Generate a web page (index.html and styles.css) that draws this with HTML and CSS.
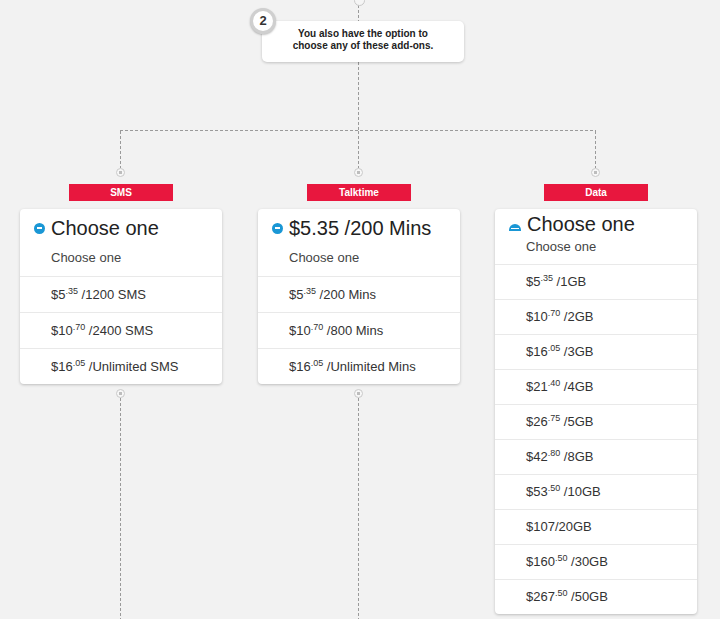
FILE: index.html
```html
<!DOCTYPE html>
<html lang="en">
<head>
<meta charset="utf-8">
<title>Add-ons</title>
<link rel="stylesheet" href="styles.css">
</head>
<body>
<div class="page">
  <div class="stem stem--top"></div>
  <div class="step">
    <span class="step-badge">2</span>
    <p class="step-text">You also have the option to<br>choose any of these add-ons.</p>
  </div>
  <div class="stem stem--mid"></div>
  <div class="hline"></div>

  <div class="columns">
    <div class="col">
      <div class="drop"></div>
      <div class="node"></div>
      <div class="label">SMS</div>
      <div class="card">
        <div class="card-head">
          <div class="card-title"><span class="icon"></span>Choose one</div>
          <div class="card-sub">Choose one</div>
        </div>
        <div class="row">$5<sup>.35</sup> /1200 SMS</div>
        <div class="row">$10<sup>.70</sup> /2400 SMS</div>
        <div class="row">$16<sup>.05</sup> /Unlimited SMS</div>
      </div>
      <div class="node node--below"></div>
      <div class="tail"></div>
    </div>

    <div class="col">
      <div class="drop"></div>
      <div class="node"></div>
      <div class="label">Talktime</div>
      <div class="card">
        <div class="card-head">
          <div class="card-title"><span class="icon"></span>$5.35 /200 Mins</div>
          <div class="card-sub">Choose one</div>
        </div>
        <div class="row">$5<sup>.35</sup> /200 Mins</div>
        <div class="row">$10<sup>.70</sup> /800 Mins</div>
        <div class="row">$16<sup>.05</sup> /Unlimited Mins</div>
      </div>
      <div class="node node--below"></div>
      <div class="tail"></div>
    </div>

    <div class="col col--data">
      <div class="drop"></div>
      <div class="node"></div>
      <div class="label">Data</div>
      <div class="card card--data">
        <div class="card-head">
          <div class="card-title"><span class="icon icon--clipped"><span class="icon-dot"></span></span>Choose one</div>
          <div class="card-sub">Choose one</div>
        </div>
        <div class="row">$5<sup>.35</sup> /1GB</div>
        <div class="row">$10<sup>.70</sup> /2GB</div>
        <div class="row">$16<sup>.05</sup> /3GB</div>
        <div class="row">$21<sup>.40</sup> /4GB</div>
        <div class="row">$26<sup>.75</sup> /5GB</div>
        <div class="row">$42<sup>.80</sup> /8GB</div>
        <div class="row">$53<sup>.50</sup> /10GB</div>
        <div class="row">$107/20GB</div>
        <div class="row">$160<sup>.50</sup> /30GB</div>
        <div class="row">$267<sup>.50</sup> /50GB</div>
      </div>
    </div>
  </div>
</div>
</body>
</html>
```

FILE: styles.css
```css
* { box-sizing: border-box; }

html, body {
  margin: 0;
  padding: 0;
  height: 619px;
  overflow: hidden;
  background: #f2f2f2;
  font-family: "Liberation Sans", Arial, Helvetica, sans-serif;
  color: #333;
}

.page {
  width: 720px;
}

/* dashed connectors */
.stem {
  width: 1px;
  margin-left: 358px;
  background: repeating-linear-gradient(to bottom, #9a9a9a 0 3px, transparent 3px 5px);
}
.stem--top {
  height: 21px;
  position: relative;
}
.stem--top::before {
  content: "";
  position: absolute;
  left: -4px;
  top: -5px;
  width: 9px;
  height: 9px;
  border-radius: 50%;
  border: 1px solid #c9c9c9;
  background: #f5f5f5;
}
.stem--mid {
  height: 68px;
}

.hline {
  margin-left: 120px;
  width: 476px;
  height: 1px;
  background: repeating-linear-gradient(to right, #9a9a9a 0 3px, transparent 3px 5px);
}

/* step box */
.step {
  position: relative;
  margin-left: 262px;
  width: 202px;
  height: 41px;
  background: #fff;
  border-radius: 5px;
  box-shadow: 0 1px 3px rgba(0, 0, 0, 0.2);
  padding-top: 7px;
}
.step-text {
  margin: 0;
  text-align: center;
  font-size: 10px;
  line-height: 12px;
  font-weight: bold;
  color: #222;
}
.step-badge {
  position: absolute;
  left: -12px;
  top: -13px;
  width: 26px;
  height: 26px;
  border-radius: 50%;
  border: 3px solid #cfcfcf;
  background: #fff;
  box-shadow: 0 1px 2px rgba(0, 0, 0, 0.25);
  font-size: 13px;
  font-weight: bold;
  line-height: 20px;
  text-align: center;
  color: #333;
}

/* columns */
.columns {
  display: flex;
  align-items: flex-start;
  gap: 36px;
  padding-left: 20px;
}
.col {
  width: 202px;
  display: flex;
  flex-direction: column;
}
.col--data {
  margin-left: -1px;
}

.drop {
  width: 1px;
  height: 37px;
  margin-left: 100px;
  background: repeating-linear-gradient(to bottom, #9a9a9a 0 3px, transparent 3px 5px);
}
.node {
  width: 9px;
  height: 9px;
  margin-left: 96px;
  border-radius: 50%;
  border: 1px solid #cacaca;
  background: radial-gradient(circle, #bdbdbd 0 1.5px, #f7f7f7 2px);
}
.node--below {
  margin-top: 5px;
}
.tail {
  width: 1px;
  height: 240px;
  margin-left: 100px;
  background: repeating-linear-gradient(to bottom, #9a9a9a 0 3px, transparent 3px 5px);
}

.label {
  align-self: center;
  width: 104px;
  height: 17px;
  margin-top: 7px;
  background: #e8173e;
  color: #fff;
  font-size: 10px;
  font-weight: bold;
  line-height: 17px;
  text-align: center;
}

/* cards */
.card {
  margin-top: 8px;
  background: #fff;
  border-radius: 4px;
  box-shadow: 0 1px 3px rgba(0, 0, 0, 0.22);
}
.card-head {
  padding: 7px 0 10px 14px;
}
.card-title {
  display: flex;
  align-items: center;
  gap: 6px;
  font-size: 20px;
  line-height: 24px;
  color: #222;
}
.icon {
  flex: none;
  position: relative;
  width: 11px;
  height: 11px;
  border-radius: 50%;
  background: #1a97d5;
}
.icon::after {
  content: "";
  position: absolute;
  left: 3px;
  top: 4.5px;
  width: 5px;
  height: 2px;
  background: #fff;
}
.icon--clipped {
  width: 12px;
  height: 7px;
  margin-top: 6px;
  border-radius: 0;
  background: none;
  overflow: hidden;
}
.icon--clipped::after {
  display: none;
}
.icon-dot {
  display: block;
  position: relative;
  width: 12px;
  height: 12px;
  border-radius: 50%;
  background: #1a97d5;
}
.icon-dot::after {
  content: "";
  position: absolute;
  left: 2px;
  top: 4px;
  width: 8px;
  height: 1px;
  background: #fff;
}
.card-sub {
  margin-top: 10px;
  padding-left: 17px;
  font-size: 13px;
  line-height: 16px;
  color: #444;
}

.row {
  height: 36px;
  border-top: 1px solid #e9e9e9;
  padding-left: 31px;
  font-size: 13px;
  line-height: 35px;
  color: #333;
}
.row sup {
  font-size: 9px;
  line-height: 0;
  vertical-align: 5px;
}

.card--data .card-head {
  padding-top: 3px;
  padding-bottom: 9px;
}
.card--data .card-sub {
  margin-top: 3px;
}
.card--data .row {
  height: 35px;
  line-height: 34px;
}
```
